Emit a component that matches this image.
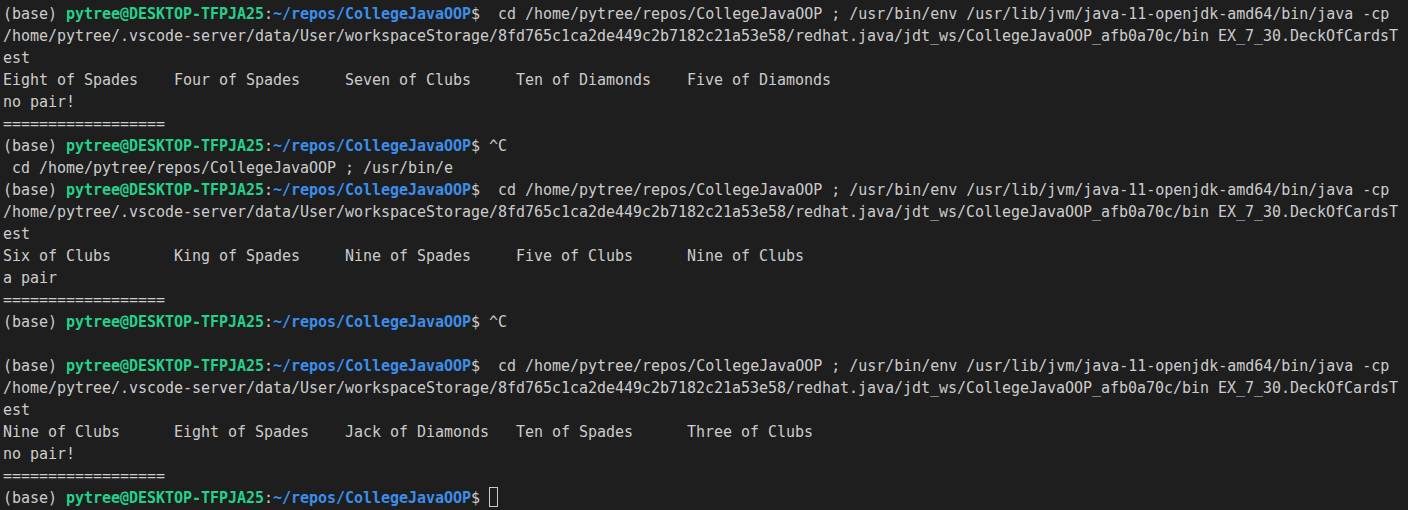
import React from 'react';

const CMD =
  'cd /home/pytree/repos/CollegeJavaOOP ; /usr/bin/env /usr/lib/jvm/java-11-openjdk-amd64/bin/java -cp';
const CP =
  '/home/pytree/.vscode-server/data/User/workspaceStorage/8fd765c1ca2de449c2b7182c21a53e58/redhat.java/jdt_ws/CollegeJavaOOP_afb0a70c/bin EX_7_30.DeckOfCardsT';
const RULE = '==================';

function Prompt({ children }: { children?: React.ReactNode }) {
  return (
    <div className="h-[22px]">
      (base) <span className="font-bold text-[#23d18b]">pytree@DESKTOP-TFPJA25</span>:
      <span className="font-bold text-[#3b8eea]">~/repos/CollegeJavaOOP</span>${children}
    </div>
  );
}

function Line({ text }: { text: string }) {
  return <div className="h-[22px]">{text}</div>;
}

// pad each card name to the 19-column tab stops
function Hand({ cards }: { cards: string[] }) {
  return <Line text={cards.map((c) => c.padEnd(19, ' ')).join('').trimEnd()} />;
}

function Run({ cards, result }: { cards: string[]; result: string }) {
  return (
    <>
      <Prompt>{'  ' + CMD}</Prompt>
      <Line text={CP} />
      <Line text="est" />
      <Hand cards={cards} />
      <Line text={result} />
      <Line text={RULE} />
    </>
  );
}

export default function App() {
  return (
    <div
      className="w-[1408px] h-[510px] overflow-hidden bg-[#1e1e1e] text-[#cccccc] text-[15px] leading-[22px] tracking-[-0.03px] whitespace-pre pl-[3px] pt-[3px]"
      style={{ fontFamily: '"DejaVu Sans Mono", "Liberation Mono", monospace' }}
    >
      <Run
        cards={['Eight of Spades', 'Four of Spades', 'Seven of Clubs', 'Ten of Diamonds', 'Five of Diamonds']}
        result="no pair!"
      />
      <Prompt>{' ^C'}</Prompt>
      <Line text=" cd /home/pytree/repos/CollegeJavaOOP ; /usr/bin/e" />
      <Run
        cards={['Six of Clubs', 'King of Spades', 'Nine of Spades', 'Five of Clubs', 'Nine of Clubs']}
        result="a pair"
      />
      <Prompt>{' ^C'}</Prompt>
      <Line text="" />
      <Run
        cards={['Nine of Clubs', 'Eight of Spades', 'Jack of Diamonds', 'Ten of Spades', 'Three of Clubs']}
        result="no pair!"
      />
      <Prompt>
        {' '}
        <span className="inline-block w-[9px] h-[20px] align-[-4px] border border-[#cccccc]" />
      </Prompt>
    </div>
  );
}
